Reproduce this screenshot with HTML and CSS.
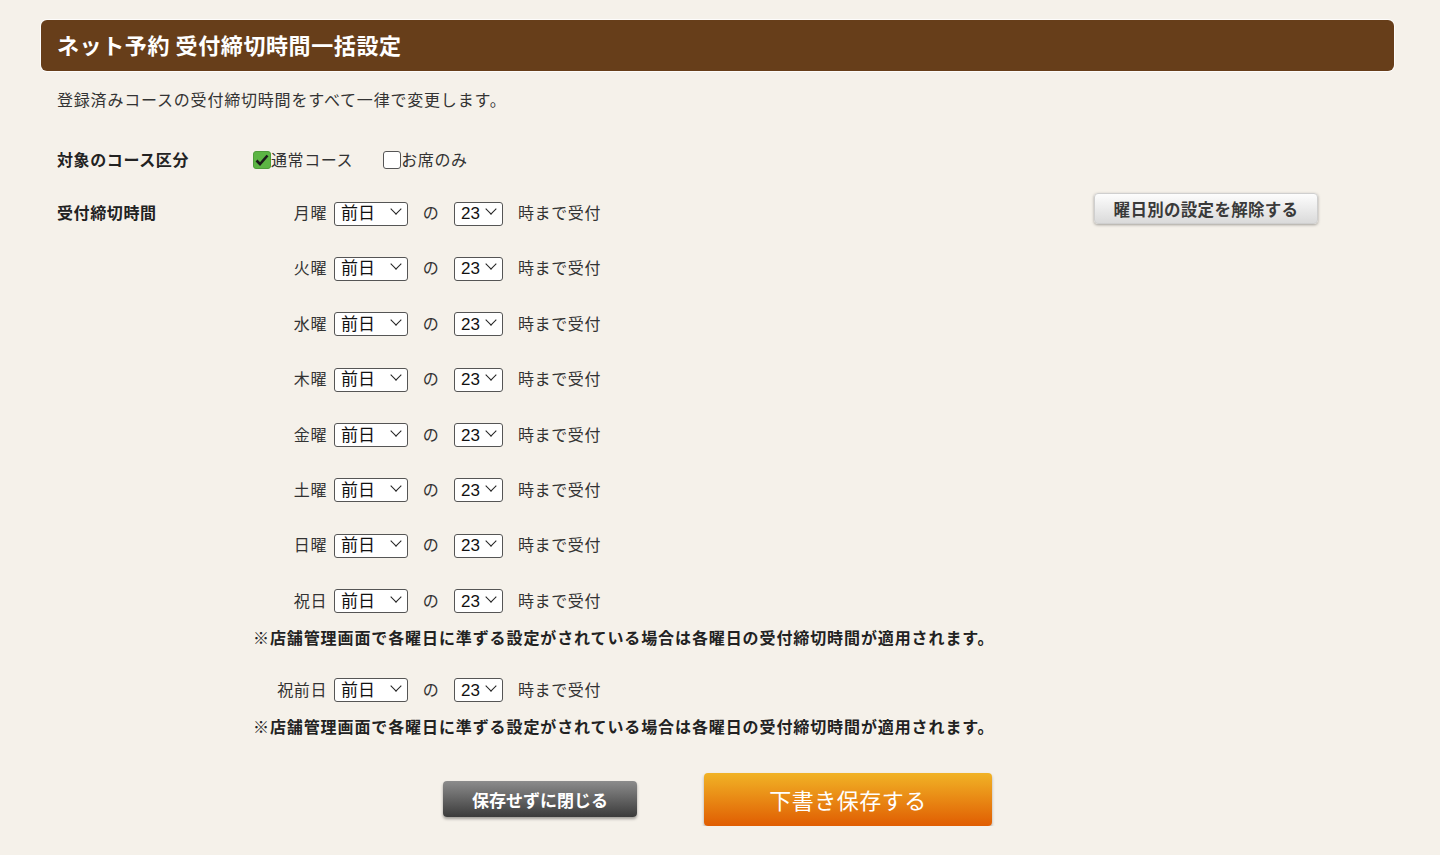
FILE: index.html
```html
<!DOCTYPE html>
<html lang="ja">
<head>
    <meta charset="UTF-8">
    <title>ネット予約 受付締切時間一括設定</title>
    <link rel="stylesheet" href="styles.css">
</head>
<body>
    <div id="page">
        <h1 class="page-title">ネット予約 受付締切時間一括設定</h1>
        <p class="lead">登録済みコースの受付締切時間をすべて一律で変更します。</p>

        <div class="form-row course-row">
            <div class="form-label">対象のコース区分</div>
            <div class="form-field">
                <label class="check">
                    <span class="box checked">
                        <svg width="14" height="12" viewBox="0 0 14 12"><path d="M1.5 6.5 L5 10 L12.5 1.5" fill="none" stroke="#1b1b1b" stroke-width="2.6"/></svg>
                    </span>通常コース
                </label>
                <label class="check">
                    <span class="box"></span>お席のみ
                </label>
            </div>
        </div>

        <div class="form-row deadline-row">
            <div class="form-label">受付締切時間</div>
            <div class="form-field">
                <div class="day-list">
                    <div class="day-row">
                        <span class="day-name">月曜</span>
                        <span class="select wide"><select><option>前日</option></select></span>
                        <span class="no">の</span>
                        <span class="select"><select><option>23</option></select></span>
                        <span class="until">時まで受付</span>
                    </div>
                    <div class="day-row">
                        <span class="day-name">火曜</span>
                        <span class="select wide"><select><option>前日</option></select></span>
                        <span class="no">の</span>
                        <span class="select"><select><option>23</option></select></span>
                        <span class="until">時まで受付</span>
                    </div>
                    <div class="day-row">
                        <span class="day-name">水曜</span>
                        <span class="select wide"><select><option>前日</option></select></span>
                        <span class="no">の</span>
                        <span class="select"><select><option>23</option></select></span>
                        <span class="until">時まで受付</span>
                    </div>
                    <div class="day-row">
                        <span class="day-name">木曜</span>
                        <span class="select wide"><select><option>前日</option></select></span>
                        <span class="no">の</span>
                        <span class="select"><select><option>23</option></select></span>
                        <span class="until">時まで受付</span>
                    </div>
                    <div class="day-row">
                        <span class="day-name">金曜</span>
                        <span class="select wide"><select><option>前日</option></select></span>
                        <span class="no">の</span>
                        <span class="select"><select><option>23</option></select></span>
                        <span class="until">時まで受付</span>
                    </div>
                    <div class="day-row">
                        <span class="day-name">土曜</span>
                        <span class="select wide"><select><option>前日</option></select></span>
                        <span class="no">の</span>
                        <span class="select"><select><option>23</option></select></span>
                        <span class="until">時まで受付</span>
                    </div>
                    <div class="day-row">
                        <span class="day-name">日曜</span>
                        <span class="select wide"><select><option>前日</option></select></span>
                        <span class="no">の</span>
                        <span class="select"><select><option>23</option></select></span>
                        <span class="until">時まで受付</span>
                    </div>
                    <div class="day-row">
                        <span class="day-name">祝日</span>
                        <span class="select wide"><select><option>前日</option></select></span>
                        <span class="no">の</span>
                        <span class="select"><select><option>23</option></select></span>
                        <span class="until">時まで受付</span>
                    </div>
                </div>
                <p class="note">※店舗管理画面で各曜日に準ずる設定がされている場合は各曜日の受付締切時間が適用されます。</p>
                <div class="day-row eve">
                    <span class="day-name">祝前日</span>
                    <span class="select wide"><select><option>前日</option></select></span>
                    <span class="no">の</span>
                    <span class="select"><select><option>23</option></select></span>
                    <span class="until">時まで受付</span>
                </div>
                <p class="note">※店舗管理画面で各曜日に準ずる設定がされている場合は各曜日の受付締切時間が適用されます。</p>
            </div>
            <button class="btn-reset">曜日別の設定を解除する</button>
        </div>

        <div class="actions">
            <button class="btn-close">保存せずに閉じる</button>
            <button class="btn-save">下書き保存する</button>
        </div>
    </div>
</body>
</html>
```

FILE: styles.css
```css
*{
    padding: 0;
    margin: 0;
    box-sizing: border-box;
}
body{
    background-color: #f5f1ea;
    font-family: "Noto Sans CJK JP", "Noto Sans", sans-serif;
    font-size: 16px;
    color: #333;
}
#page{
    padding: 20px 46px 0 41px;
}
.page-title{
    height: 51px;
    line-height: 49px;
    padding-left: 16px;
    background-color: #673e1a;
    border-radius: 6px;
    box-shadow: 0 0 0 1px rgba(255,255,255,0.8);
    color: #fff;
    font-size: 22px;
    font-weight: bold;
    letter-spacing: 0.6px;
}
.lead{
    margin-top: 16px;
    padding-left: 16px;
    line-height: 24px;
    letter-spacing: 0.8px;
}
.form-row{
    display: flex;
    align-items: flex-start;
    padding-left: 16px;
}
.form-label{
    width: 196px;
    line-height: 24px;
    font-weight: bold;
    color: #222;
    letter-spacing: 0.6px;
}
.form-field{
    flex: 1;
}
.course-row{
    margin-top: 36px;
}
.course-row .form-field{
    display: flex;
    gap: 30px;
}
.check{
    display: flex;
    align-items: center;
    line-height: 24px;
    letter-spacing: 0.6px;
}
.check .box{
    display: flex;
    align-items: center;
    justify-content: center;
    width: 18px;
    height: 18px;
    margin-top: 2px;
    border: 1px solid #555;
    border-radius: 3px;
    background-color: #fff;
}
.check .box.checked{
    background-color: #5cb544;
    border-color: #4e9d3a;
}
.deadline-row{
    margin-top: 29px;
}
.day-list{
    display: flex;
    flex-direction: column;
    gap: 31.4px;
}
.day-row{
    display: flex;
    align-items: center;
    height: 24px;
    letter-spacing: 0.6px;
}
.day-name{
    width: 81px;
    padding-right: 7px;
    text-align: right;
}
.select{
    position: relative;
    display: inline-block;
    width: 49px;
    height: 24px;
}
.select.wide{
    width: 74px;
}
.select select{
    appearance: none;
    -webkit-appearance: none;
    width: 100%;
    height: 100%;
    padding-left: 6px;
    border: 1px solid #555;
    border-radius: 3px;
    background-color: #fff;
    font-family: "Liberation Sans", "Noto Sans CJK JP", sans-serif;
    font-size: 17px;
    color: #111;
}
.select::after{
    content: '';
    position: absolute;
    right: 8px;
    top: 5px;
    width: 7px;
    height: 7px;
    border-right: 1.5px solid #222;
    border-bottom: 1.5px solid #222;
    transform: rotate(45deg);
    pointer-events: none;
}
.no{
    width: 46px;
    text-align: center;
}
.until{
    margin-left: 15px;
}
.note{
    margin-top: 13px;
    line-height: 24px;
    font-weight: bold;
    color: #222;
    letter-spacing: 0.9px;
}
.eve{
    margin-top: 28px;
}
.btn-reset{
    margin: -7px 76px 0 0;
    width: 224px;
    height: 31px;
    border: 1px solid #cfcfcf;
    border-radius: 4px;
    background: linear-gradient(#fdfdfd, #dadada);
    box-shadow: 0 1px 3px rgba(0,0,0,0.35);
    font-family: inherit;
    font-size: 16.5px;
    font-weight: bold;
    color: #3a3a3a;
    letter-spacing: 0.3px;
}
.actions{
    display: flex;
    justify-content: center;
    align-items: center;
    gap: 67px;
    margin-top: 35px;
}
.btn-close{
    width: 194px;
    height: 36px;
    border: none;
    border-radius: 4px;
    background: linear-gradient(#8c8c8c, #3b3b3b);
    box-shadow: 0 2px 3px rgba(0,0,0,0.35);
    font-family: inherit;
    font-size: 17px;
    font-weight: bold;
    color: #fff;
}
.btn-save{
    width: 288px;
    height: 53px;
    border: none;
    border-radius: 4px;
    background: linear-gradient(#f1b326, #e05d02);
    box-shadow: 0 2px 3px rgba(0,0,0,0.3);
    font-family: inherit;
    font-size: 22px;
    color: #fff;
    letter-spacing: 0.5px;
}
```
